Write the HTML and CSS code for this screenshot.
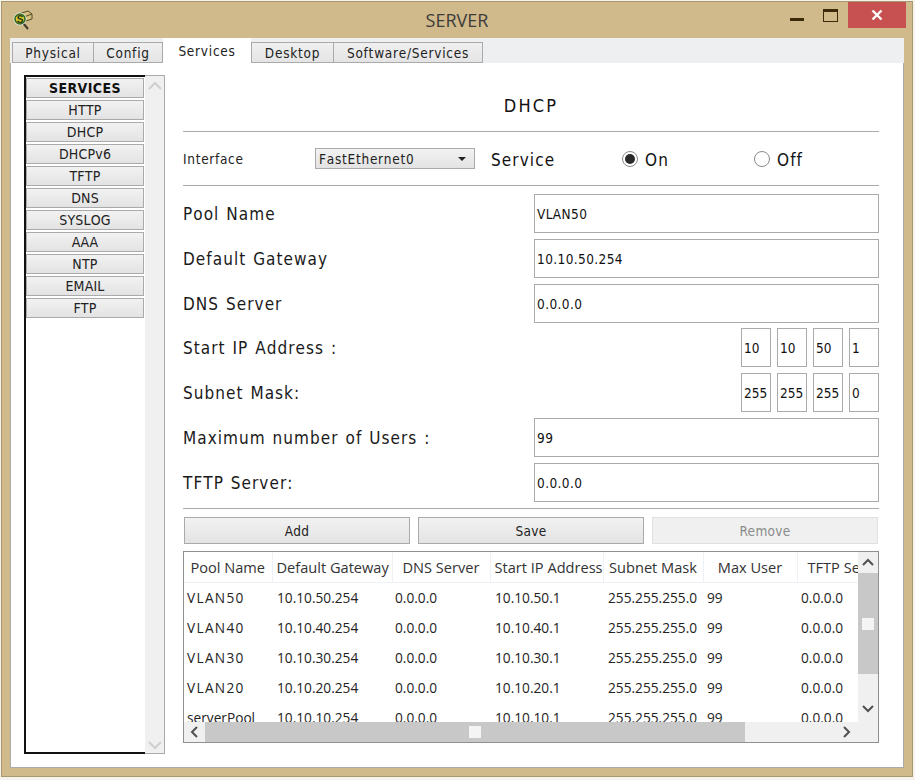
FILE: index.html
```html
<!DOCTYPE html>
<html lang="en">
<head>
    <meta charset="UTF-8">
    <title>SERVER</title>
    <link rel="stylesheet" href="styles.css">
</head>
<body>
    <div class="window">
        <div class="titlebar">
            <svg class="app-icon" width="20" height="21" viewBox="0 0 20 21">
                <path d="M6 5l9-3 4 3v5l-9 3-4-3z" fill="#d8c07c" stroke="#4e4a2a"/>
                <path d="M6 5l5 3 8-3M11 8v5" fill="none" stroke="#4e4a2a"/>
                <path d="M10 14l5 6" stroke="#3c3a2c" stroke-width="2"/>
                <circle cx="7" cy="10" r="6.5" fill="#f2efe6"/>
                <circle cx="7" cy="10" r="5" fill="#d9c932" stroke="#2f6a24" stroke-width="1.6"/>
                <text class="icon-letter" x="7" y="13.5">S</text>
            </svg>
            <div class="title">SERVER</div>
            <div class="win-controls">
                <div class="win-min"></div>
                <div class="win-max"></div>
                <div class="win-close">
                    <svg width="12" height="12" viewBox="0 0 12 12"><path d="M1.5 1.5l9 9M10.5 1.5l-9 9" stroke="#fff" stroke-width="2.4"/></svg>
                </div>
            </div>
        </div>

        <div class="tabs">
            <div class="tab">Physical</div>
            <div class="tab tab-config">Config</div>
            <div class="tab tab-active">Services</div>
            <div class="tab tab-desktop">Desktop</div>
            <div class="tab tab-software">Software/Services</div>
        </div>

        <div class="pane">
            <div class="sidebar">
                <div class="service-list">
                    <div class="service-btn service-head">SERVICES</div>
                    <div class="service-btn">HTTP</div>
                    <div class="service-btn">DHCP</div>
                    <div class="service-btn">DHCPv6</div>
                    <div class="service-btn">TFTP</div>
                    <div class="service-btn">DNS</div>
                    <div class="service-btn">SYSLOG</div>
                    <div class="service-btn">AAA</div>
                    <div class="service-btn">NTP</div>
                    <div class="service-btn">EMAIL</div>
                    <div class="service-btn">FTP</div>
                </div>
                <div class="side-scroll">
                    <svg width="16" height="10" viewBox="0 0 16 10"><path d="M2 8l6-6 6 6" fill="none" stroke="#cfcfcf" stroke-width="2"/></svg>
                    <svg width="16" height="10" viewBox="0 0 16 10"><path d="M2 2l6 6 6-6" fill="none" stroke="#cfcfcf" stroke-width="2"/></svg>
                </div>
            </div>

            <div class="main">
                <h2 class="heading">DHCP</h2>

                <div class="iface-row">
                    <span class="iface-label">Interface</span>
                    <div class="select">
                        <span>FastEthernet0</span>
                        <span class="select-arrow"></span>
                    </div>
                    <span class="service-label">Service</span>
                    <span class="radio radio-on"></span>
                    <span class="radio-text">On</span>
                    <span class="radio radio-off"></span>
                    <span class="radio-text">Off</span>
                </div>

                <div class="fields">
                    <div class="field">
                        <label>Pool Name</label>
                        <div class="input">VLAN50</div>
                    </div>
                    <div class="field">
                        <label>Default Gateway</label>
                        <div class="input">10.10.50.254</div>
                    </div>
                    <div class="field">
                        <label>DNS Server</label>
                        <div class="input">0.0.0.0</div>
                    </div>
                    <div class="field field-ip">
                        <label>Start IP Address :</label>
                        <div class="octets">
                            <div class="octet">10</div>
                            <div class="octet">10</div>
                            <div class="octet">50</div>
                            <div class="octet">1</div>
                        </div>
                    </div>
                    <div class="field">
                        <label>Subnet Mask:</label>
                        <div class="octets">
                            <div class="octet">255</div>
                            <div class="octet">255</div>
                            <div class="octet">255</div>
                            <div class="octet">0</div>
                        </div>
                    </div>
                    <div class="field">
                        <label>Maximum number of Users :</label>
                        <div class="input">99</div>
                    </div>
                    <div class="field">
                        <label>TFTP Server:</label>
                        <div class="input">0.0.0.0</div>
                    </div>
                </div>

                <div class="actions">
                    <button type="button" class="action-btn">Add</button>
                    <button type="button" class="action-btn">Save</button>
                    <button type="button" class="action-btn" disabled>Remove</button>
                </div>

                <div class="pool-box">
                    <div class="pool-top">
                        <div class="pool-view">
                            <table class="pool-table">
                                <colgroup>
                                    <col class="col-pool">
                                    <col class="col-gateway">
                                    <col class="col-dns">
                                    <col class="col-start">
                                    <col class="col-mask">
                                    <col class="col-max">
                                    <col class="col-tftp">
                                </colgroup>
                                <thead>
                                    <tr>
                                        <th>Pool Name</th>
                                        <th>Default Gateway</th>
                                        <th>DNS Server</th>
                                        <th>Start IP Address</th>
                                        <th>Subnet Mask</th>
                                        <th>Max User</th>
                                        <th>TFTP Server</th>
                                    </tr>
                                </thead>
                                <tbody>
                                    <tr><td class="vlan">VLAN50</td><td>10.10.50.254</td><td>0.0.0.0</td><td>10.10.50.1</td><td>255.255.255.0</td><td>99</td><td>0.0.0.0</td></tr>
                                    <tr><td class="vlan">VLAN40</td><td>10.10.40.254</td><td>0.0.0.0</td><td>10.10.40.1</td><td>255.255.255.0</td><td>99</td><td>0.0.0.0</td></tr>
                                    <tr><td class="vlan">VLAN30</td><td>10.10.30.254</td><td>0.0.0.0</td><td>10.10.30.1</td><td>255.255.255.0</td><td>99</td><td>0.0.0.0</td></tr>
                                    <tr><td class="vlan">VLAN20</td><td>10.10.20.254</td><td>0.0.0.0</td><td>10.10.20.1</td><td>255.255.255.0</td><td>99</td><td>0.0.0.0</td></tr>
                                    <tr><td>serverPool</td><td>10.10.10.254</td><td>0.0.0.0</td><td>10.10.10.1</td><td>255.255.255.0</td><td>99</td><td>0.0.0.0</td></tr>
                                </tbody>
                            </table>
                        </div>
                        <div class="vscroll">
                            <svg class="arrow-up" width="14" height="9" viewBox="0 0 14 9"><path d="M2 7l5-5 5 5" fill="none" stroke="#505050" stroke-width="2"/></svg>
                            <div class="vthumb"><span class="grip"></span></div>
                            <svg class="arrow-down" width="14" height="9" viewBox="0 0 14 9"><path d="M2 2l5 5 5-5" fill="none" stroke="#505050" stroke-width="2"/></svg>
                        </div>
                    </div>
                    <div class="hscroll">
                        <svg class="arrow-left" width="9" height="14" viewBox="0 0 9 14"><path d="M7 2L2 7l5 5" fill="none" stroke="#505050" stroke-width="2"/></svg>
                        <div class="hthumb"><span class="grip"></span></div>
                        <svg class="arrow-right" width="9" height="14" viewBox="0 0 9 14"><path d="M2 2l5 5-5 5" fill="none" stroke="#505050" stroke-width="2"/></svg>
                    </div>
                </div>
            </div>
        </div>
    </div>
</body>
</html>
```

FILE: styles.css
```css
* {
    box-sizing: border-box;
}
body {
    margin: 0;
    background: #f6f3ec;
    font-family: "DejaVu Sans Condensed", "DejaVu Sans", sans-serif;
    font-kerning: none;
    color: #111;
}
.window {
    width: 912px;
    height: 776px;
    margin: 1px 0 0 1px;
    padding: 0 8px 8px 8px;
    background: #d0b98a;
    border: 1px solid #a8976f;
    display: flex;
    flex-direction: column;
}

/* title bar */
.titlebar {
    height: 36px;
    flex: none;
    display: flex;
    align-items: flex-start;
    position: relative;
}
.app-icon {
    margin: 7px 0 0 3px;
}
.icon-letter {
    font-family: "Liberation Sans", sans-serif;
    font-size: 10px;
    font-weight: bold;
    text-anchor: middle;
    fill: #2a3a10;
}
.title {
    position: absolute;
    left: 0;
    right: 0;
    top: 6px;
    text-align: center;
    font-family: "Open Sans", sans-serif;
    font-size: 18px;
    color: #3c3c3c;
}
.win-controls {
    margin-left: auto;
    margin-right: -2px;
    display: flex;
    align-items: flex-start;
}
.win-min {
    width: 14px;
    height: 3px;
    margin: 16px 19px 0 0;
    background: #3a2a08;
}
.win-max {
    width: 15px;
    height: 13px;
    margin: 7px 10px 0 0;
    border: 1px solid #3a2a08;
    border-top-width: 3px;
}
.win-close {
    width: 58px;
    height: 26px;
    background: #c75050;
    display: flex;
    align-items: center;
    justify-content: center;
}

/* tabs */
.tabs {
    height: 25px;
    flex: none;
    display: flex;
    align-items: flex-end;
    padding-left: 2px;
    background: #eeeff1;
    margin-bottom: -1px;
    position: relative;
}
.tab {
    width: 81px;
    height: 21px;
    background: linear-gradient(#f0f0f0, #e4e4e4);
    border: 1px solid #aaa;
    border-right: none;
    font-size: 13.5px;
    letter-spacing: 0.75px;
    text-align: center;
    line-height: 20px;
    color: #222;
}
.tab-config {
    width: 70px;
    border-right: 1px solid #aaa;
}
.tab-active {
    width: 88px;
    height: 25px;
    background: #fff;
    border: none;
    line-height: 26px;
    position: relative;
    z-index: 1;
}
.tab-desktop {
    width: 82px;
}
.tab-software {
    width: 150px;
    border-right: 1px solid #aaa;
}

/* pane */
.pane {
    flex: 1;
    display: flex;
    gap: 18px;
    padding: 12px 0 13px 13px;
    background: #fff;
    border: 1px solid #aaa;
}

/* services list */
.sidebar {
    width: 141px;
    flex: none;
    display: flex;
    border: 1px solid #aaa;
    border-left: none;
}
.service-list {
    width: 121px;
    margin: -1px 0;
    padding: 1px 1px 0 0;
    border: 2px solid #111;
    border-right: none;
    display: flex;
    flex-direction: column;
    gap: 2px;
}
.service-btn {
    height: 20px;
    flex: none;
    background: linear-gradient(#f2f2f2, #e3e3e3);
    border: 1px solid #aaa;
    font-size: 14px;
    letter-spacing: 0.2px;
    line-height: 19px;
    text-align: center;
    color: #222;
}
.service-head {
    font-weight: bold;
    letter-spacing: 0.4px;
    color: #111;
}
.side-scroll {
    flex: 1;
    background: #f0f0f0;
    display: flex;
    flex-direction: column;
    justify-content: space-between;
    align-items: center;
    padding: 5px 0 3px;
}

/* dhcp form */
.main {
    width: 696px;
    flex: none;
    margin-top: 1px;
    display: flex;
    flex-direction: column;
}
.heading {
    height: 56px;
    margin: 0;
    padding-top: 18px;
    border-bottom: 1px solid #aaa;
    font-size: 18px;
    font-weight: normal;
    letter-spacing: 2.2px;
    text-align: center;
    line-height: 24px;
}
.iface-row {
    height: 54px;
    display: flex;
    align-items: center;
    border-bottom: 1px solid #aaa;
}
.iface-label {
    width: 132px;
    flex: none;
    font-size: 13.5px;
    letter-spacing: 0.7px;
    color: #222;
}
.select {
    width: 160px;
    height: 21px;
    flex: none;
    padding: 0 8px 0 3px;
    background: linear-gradient(#f2f2f2, #e3e3e3);
    border: 1px solid #aaa;
    display: flex;
    align-items: center;
    justify-content: space-between;
    font-size: 13.5px;
    letter-spacing: 0.75px;
    color: #222;
}
.select-arrow {
    width: 0;
    height: 0;
    border: 4px solid transparent;
    border-top: 4px solid #222;
    border-bottom: none;
}
.service-label {
    width: 131px;
    flex: none;
    margin-left: 16px;
    padding-top: 2px;
    font-size: 17px;
    letter-spacing: 1.1px;
}
.radio {
    width: 16px;
    height: 16px;
    flex: none;
    border-radius: 50%;
    border: 1px solid #8a8a8a;
    background: #fff;
    position: relative;
}
.radio-on::after {
    content: "";
    position: absolute;
    left: 2px;
    top: 2px;
    width: 10px;
    height: 10px;
    border-radius: 50%;
    background: #2a2a2a;
}
.radio-text {
    width: 109px;
    flex: none;
    margin-left: 7px;
    padding-top: 2px;
    font-size: 17px;
    letter-spacing: 1.1px;
}
.fields {
    margin-top: 8px;
    padding-bottom: 6px;
    border-bottom: 1px solid #aaa;
    display: flex;
    flex-direction: column;
    gap: 6px;
    height: 315px;
}
.field {
    height: 39px;
    display: flex;
    align-items: center;
    justify-content: space-between;
}
.field-ip {
    margin-top: -1px;
}
.field label {
    font-size: 17px;
    letter-spacing: 1.05px;
    word-spacing: 1px;
    color: #1a1a1a;
}
.input {
    width: 345px;
    height: 39px;
    padding-left: 2px;
    border: 1px solid #aaa;
    font-size: 13.5px;
    letter-spacing: 0.4px;
    line-height: 39px;
    color: #111;
}
.octets {
    display: flex;
    gap: 6px;
}
.octet {
    width: 30px;
    height: 39px;
    padding-left: 2px;
    border: 1px solid #aaa;
    font-size: 13.5px;
    line-height: 39px;
}
.actions {
    display: flex;
    gap: 8px;
    margin: 8px 1px 0;
}
.action-btn {
    width: 226px;
    height: 27px;
    padding: 0;
    background: linear-gradient(#f2f2f2, #e3e3e3);
    border: 1px solid #aaa;
    font-family: inherit;
    font-size: 13.5px;
    letter-spacing: 0.3px;
    color: #222;
}
.action-btn:disabled {
    background: #f0f0f0;
    border-color: #e0e0e0;
    color: #8a8a8a;
}

/* pool table */
.pool-box {
    width: 696px;
    height: 192px;
    margin-top: 7px;
    border: 1px solid #8f8f8f;
    font-family: "Open Sans", sans-serif;
    display: flex;
    flex-direction: column;
}
.pool-top {
    height: 170px;
    flex: none;
    display: flex;
}
.pool-view {
    width: 674px;
    overflow: hidden;
}
.pool-table {
    width: 750px;
    table-layout: fixed;
    border-collapse: collapse;
    font-size: 13.7px;
    color: #222;
}
.col-pool { width: 88px; }
.col-gateway { width: 120px; }
.col-dns { width: 98px; }
.col-start { width: 113px; }
.col-mask { width: 100px; }
.col-max { width: 94px; }
.col-tftp { width: 137px; }
.pool-table th {
    height: 30px;
    padding: 0 4px;
    font-size: 14.6px;
    font-weight: normal;
    white-space: nowrap;
    overflow: hidden;
    border-right: 1px solid #eef2f6;
    border-bottom: 1px solid #eef2f6;
    color: #333;
    text-align: center;
}
.pool-table th:nth-child(7) {
    text-align: left;
    padding-left: 10px;
}
.pool-table td {
    height: 30px;
    padding: 0 0 0 5px;
    white-space: nowrap;
}
.pool-table td:nth-child(1),
.pool-table td:nth-child(3) {
    padding-left: 3px;
}
.pool-table td:nth-child(6),
.pool-table td:nth-child(7) {
    padding-left: 4px;
}
.pool-table td.vlan {
    letter-spacing: 1.3px;
}
.vscroll {
    width: 20px;
    flex: none;
    background: #f0f0f0;
    display: flex;
    flex-direction: column;
    align-items: center;
    padding-top: 6px;
}
.vthumb {
    width: 20px;
    height: 101px;
    margin-top: 6px;
    background: #c8c8c8;
    display: flex;
    align-items: center;
    justify-content: center;
}
.arrow-down {
    margin-top: 30px;
}
.grip {
    width: 12px;
    height: 12px;
    background: #f4f4f4;
}
.hscroll {
    height: 20px;
    flex: none;
    background: #f0f0f0;
    display: flex;
    align-items: center;
    padding-left: 6px;
}
.hthumb {
    width: 540px;
    height: 20px;
    margin-left: 6px;
    background: #c8c8c8;
    display: flex;
    align-items: center;
    justify-content: center;
}
.arrow-right {
    margin-left: 97px;
}
```
